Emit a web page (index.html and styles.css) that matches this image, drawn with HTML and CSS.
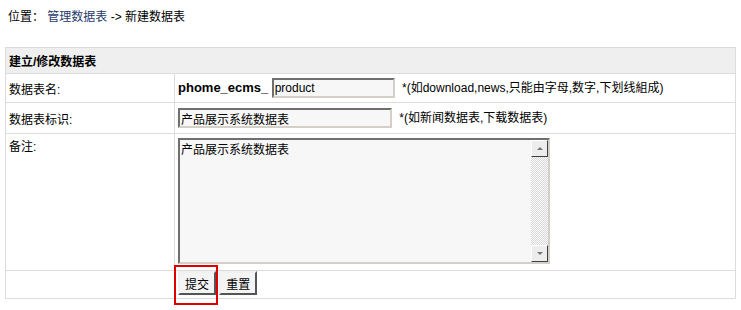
FILE: index.html
```html
<!DOCTYPE html>
<html lang="zh-CN">
<head>
  <meta charset="UTF-8">
  <title>新建数据表</title>
  <link rel="stylesheet" href="styles.css">
</head>
<body>

  <div class="crumb">位置： <a href="#">管理数据表</a> -&gt; 新建数据表</div>

  <table class="tableborder">
    <tr class="header">
      <td colspan="2">建立/修改数据表</td>
    </tr>
    <tr class="row-name">
      <td class="label">数据表名:</td>
      <td>
        <span class="prefix">phome_ecms_</span>
        <input type="text" class="tbname" value="product">
        <span class="tip">*(如download,news,只能由字母,数字,下划线組成)</span>
      </td>
    </tr>
    <tr class="row-title">
      <td class="label">数据表标识:</td>
      <td>
        <input type="text" class="tname" value="产品展示系统数据表">
        <span class="tip">*(如新闻数据表,下载数据表)</span>
      </td>
    </tr>
    <tr class="row-memo">
      <td class="label">备注:</td>
      <td>
        <div class="memo-box">
          <textarea class="memo">产品展示系统数据表</textarea>
          <div class="scrollbar">
            <span class="arrow up"></span>
            <span class="track"></span>
            <span class="arrow down"></span>
          </div>
        </div>
      </td>
    </tr>
    <tr class="row-btn">
      <td></td>
      <td>
        <span class="mark">
          <button>提交</button>
          <!-- red highlight box -->
          <span class="highlight"></span>
        </span>
        <button>重置</button>
      </td>
    </tr>
  </table>

</body>
</html>
```

FILE: styles.css
```css
html, body {
  min-height: 310px;
}
body {
  margin: 0;
  font-family: "Liberation Sans", "Noto Sans CJK SC", sans-serif;
  font-size: 12px;
  color: #000;
  background: #fff;
}
a {
  color: #1f3a6b;
  text-decoration: none;
}
.crumb {
  padding: 9px 0 0 8px;
  height: 47px;
  line-height: 16px;
  box-sizing: border-box;
}
.tableborder {
  margin: 0 0 0 5px;
  width: 731px;
  border-collapse: separate;
  border-spacing: 1px;
  background: #dcdcdc;
}
.tableborder td {
  background: #fff;
  padding: 0 3px;
  vertical-align: middle;
}
.header td {
  background: #efefef;
  font-weight: bold;
  height: 25px;
}
.label {
  width: 162px;
}
.row-name td {
  height: 28px;
}
.row-title td {
  height: 30px;
}
.row-memo td {
  height: 133px;
  vertical-align: top;
}
.row-memo .label {
  padding-top: 3px;
}
.row-btn td {
  height: 27px;
  vertical-align: top;
}
.prefix {
  font-weight: bold;
  font-size: 13px;
}
input[type="text"], .memo-box {
  font-family: "Liberation Sans", "Noto Sans CJK SC", sans-serif;
  font-size: 12px;
  border: 2px solid #d4d0c8;
  border-top-color: #6f6f6f;
  border-left-color: #6f6f6f;
  background: #f7f7f7;
  padding: 0 1px;
  margin: 0;
  vertical-align: middle;
  box-sizing: border-box;
}
.tbname {
  width: 123px;
  height: 20px;
  font-family: "DejaVu Sans", Verdana, sans-serif;
}
.tname {
  width: 214px;
  height: 20px;
}
.tip {
  margin-left: 4px;
}
.memo-box {
  display: flex;
  width: 372px;
  height: 126px;
  margin-top: 4px;
  padding: 0;
}
.memo {
  flex: 1;
  border: none;
  background: transparent;
  resize: none;
  overflow: hidden;
  font-family: "Liberation Sans", "Noto Sans CJK SC", sans-serif;
  font-size: 12px;
  line-height: 16px;
  padding: 2px 1px;
  margin: 0;
  outline: none;
}
.scrollbar {
  width: 17px;
  display: flex;
  flex-direction: column;
}
.track {
  flex: 1;
  background: repeating-conic-gradient(#d8d8d8 0 25%, #fbfbfb 0 50%) 0 0 / 2px 2px;
}
.arrow {
  height: 17px;
  background: #ededed;
  border: 1px solid;
  border-color: #fff #404040 #404040 #fff;
  box-sizing: border-box;
  position: relative;
}
.arrow::after {
  content: "";
  position: absolute;
  left: 5px;
  top: 6px;
  border-left: 3px solid transparent;
  border-right: 3px solid transparent;
}
.arrow.up::after {
  border-bottom: 3px solid #777;
}
.arrow.down::after {
  border-top: 3px solid #777;
}
button {
  font-family: "Liberation Sans", "Noto Sans CJK SC", sans-serif;
  font-size: 12px;
  height: 24px;
  padding: 0 5px;
  background: #f4f4f4;
  border: 2px solid #f0f0f0;
  border-right-color: #555;
  border-bottom-color: #555;
  margin: 0;
  vertical-align: top;
  cursor: pointer;
}
.mark {
  position: relative;
  display: inline-block;
  vertical-align: top;
}
.highlight {
  position: absolute;
  left: -4px;
  top: -6px;
  width: 44px;
  height: 40px;
  border: 2px solid #e00000;
  box-sizing: border-box;
}
```
